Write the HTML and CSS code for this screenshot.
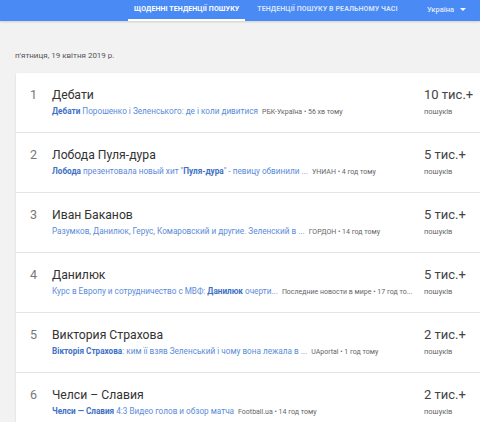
FILE: index.html
```html
<!DOCTYPE html>
<html lang="uk">
<head>
<meta charset="utf-8">
<link rel="stylesheet" href="styles.css">
</head>
<body>
<header class="topbar">
  <nav class="tabs">
    <span class="tab tab-active">Щоденні тенденції пошуку</span>
    <span class="tab">Тенденції пошуку в реальному часі</span>
  </nav>
  <div class="geo">Україна <span class="caret"></span></div>
</header>
<main class="content">
  <div class="date">п'ятниця, 19 квітня 2019 р.</div>
  <section class="card">
    <div class="row">
      <div class="num">1</div>
      <div class="main">
        <div class="title">Дебати</div>
        <div class="meta">
          <span class="snippet"><b>Дебати</b> Порошенко і Зеленського: де і коли дивитися</span>
          <span class="source">РБК-Україна • 56 хв тому</span>
        </div>
      </div>
      <div class="count"><div class="big">10 тис.+</div><div class="small">пошуків</div></div>
    </div>
    <div class="row">
      <div class="num">2</div>
      <div class="main">
        <div class="title">Лобода Пуля-дура</div>
        <div class="meta">
          <span class="snippet"><b>Лобода</b> презентовала новый хит "<b>Пуля-дура</b>" - певицу обвинили ...</span>
          <span class="source">УНИАН • 4 год тому</span>
        </div>
      </div>
      <div class="count"><div class="big">5 тис.+</div><div class="small">пошуків</div></div>
    </div>
    <div class="row">
      <div class="num">3</div>
      <div class="main">
        <div class="title">Иван Баканов</div>
        <div class="meta">
          <span class="snippet">Разумков, Данилюк, Герус, Комаровский и другие. Зеленский в ...</span>
          <span class="source">ГОРДОН • 14 год тому</span>
        </div>
      </div>
      <div class="count"><div class="big">5 тис.+</div><div class="small">пошуків</div></div>
    </div>
    <div class="row">
      <div class="num">4</div>
      <div class="main">
        <div class="title">Данилюк</div>
        <div class="meta">
          <span class="snippet">Курс в Европу и сотрудничество с МВФ: <b>Данилюк</b> очерти...</span>
          <span class="source">Последние новости в мире • 17 год то...</span>
        </div>
      </div>
      <div class="count"><div class="big">5 тис.+</div><div class="small">пошуків</div></div>
    </div>
    <div class="row">
      <div class="num">5</div>
      <div class="main">
        <div class="title">Виктория Страхова</div>
        <div class="meta">
          <span class="snippet"><b>Вікторія Страхова</b>: ким її взяв Зеленський і чому вона лежала в ...</span>
          <span class="source">UAportal • 1 год тому</span>
        </div>
      </div>
      <div class="count"><div class="big">2 тис.+</div><div class="small">пошуків</div></div>
    </div>
    <div class="row">
      <div class="num">6</div>
      <div class="main">
        <div class="title">Челси – Славия</div>
        <div class="meta">
          <span class="snippet"><b>Челси — Славия</b> 4:3 Видео голов и обзор матча</span>
          <span class="source">Football.ua • 14 год тому</span>
        </div>
      </div>
      <div class="count"><div class="big">2 тис.+</div><div class="small">пошуків</div></div>
    </div>
  </section>
</main>
</body>
</html>
```
FILE: styles.css
```css
* { box-sizing: border-box; }
html, body { margin: 0; padding: 0; }
body {
  background: #f2f2f2;
  font-family: Roboto, "Liberation Sans", Arial, sans-serif;
  width: 480px;
  height: 422px;
  overflow: hidden;
}
.topbar {
  height: 21px;
  background: #4a8af4;
  display: flex;
  align-items: stretch;
  padding-left: 128px;
  padding-right: 14px;
  box-shadow: 0 1px 2px rgba(0,0,0,0.15);
  white-space: nowrap;
}
.tabs { display: flex; align-items: stretch; flex-shrink: 0; }
.tab {
  color: rgba(255,255,255,0.78);
  font-size: 7px;
  font-weight: 700;
  text-transform: uppercase;
  letter-spacing: 0.1px;
  display: flex;
  align-items: center;
  padding: 0 6px 2px;
  border-bottom: 2px solid transparent;
  margin-right: 6px;
  flex-shrink: 0;
}
.tab-active {
  color: #fff;
  border-bottom-color: #fff;
}
.geo {
  margin-left: auto;
  color: rgba(255,255,255,0.85);
  font-size: 7.5px;
  font-weight: 500;
  display: flex;
  align-items: center;
  gap: 6px;
  padding-bottom: 2px;
  flex-shrink: 0;
}
.caret {
  width: 0; height: 0;
  border-left: 3px solid transparent;
  border-right: 3px solid transparent;
  border-top: 3.5px solid #fff;
}
.content { padding: 0 0 0 16px; }
.date {
  font-size: 8px;
  color: #555;
  padding: 30px 0 0 0;
  margin-left: -1px;
  height: 52px;
}
.card {
  background: #fff;
  box-shadow: 0 1px 2px rgba(0,0,0,0.12);
  width: 480px;
}
.row {
  display: flex;
  height: 60px;
  border-bottom: 1px solid #e4e4e4;
  padding-top: 14px;
}
.num {
  width: 36px;
  padding-left: 14px;
  font-size: 12.5px;
  line-height: 16px;
  color: #777;
}
.main {
  width: 372px;
  display: flex;
  flex-direction: column;
}
.title {
  font-size: 12.2px;
  line-height: 16px;
  color: #333;
}
.meta {
  display: flex;
  gap: 4px;
  margin-top: 3px;
  line-height: 10px;
  white-space: nowrap;
  width: 362px;
  align-items: baseline;
}
.snippet {
  font-size: 8.2px;
  color: #5b8bd9;
}
.snippet b { font-weight: 700; color: #3d70c6; }
.source {
  font-size: 7px;
  color: #666;
}
.big {
  font-size: 13px;
  line-height: 16px;
  color: #444;
}
.small {
  font-size: 7.5px;
  line-height: 10px;
  margin-top: 4px;
  color: #666;
}
```
